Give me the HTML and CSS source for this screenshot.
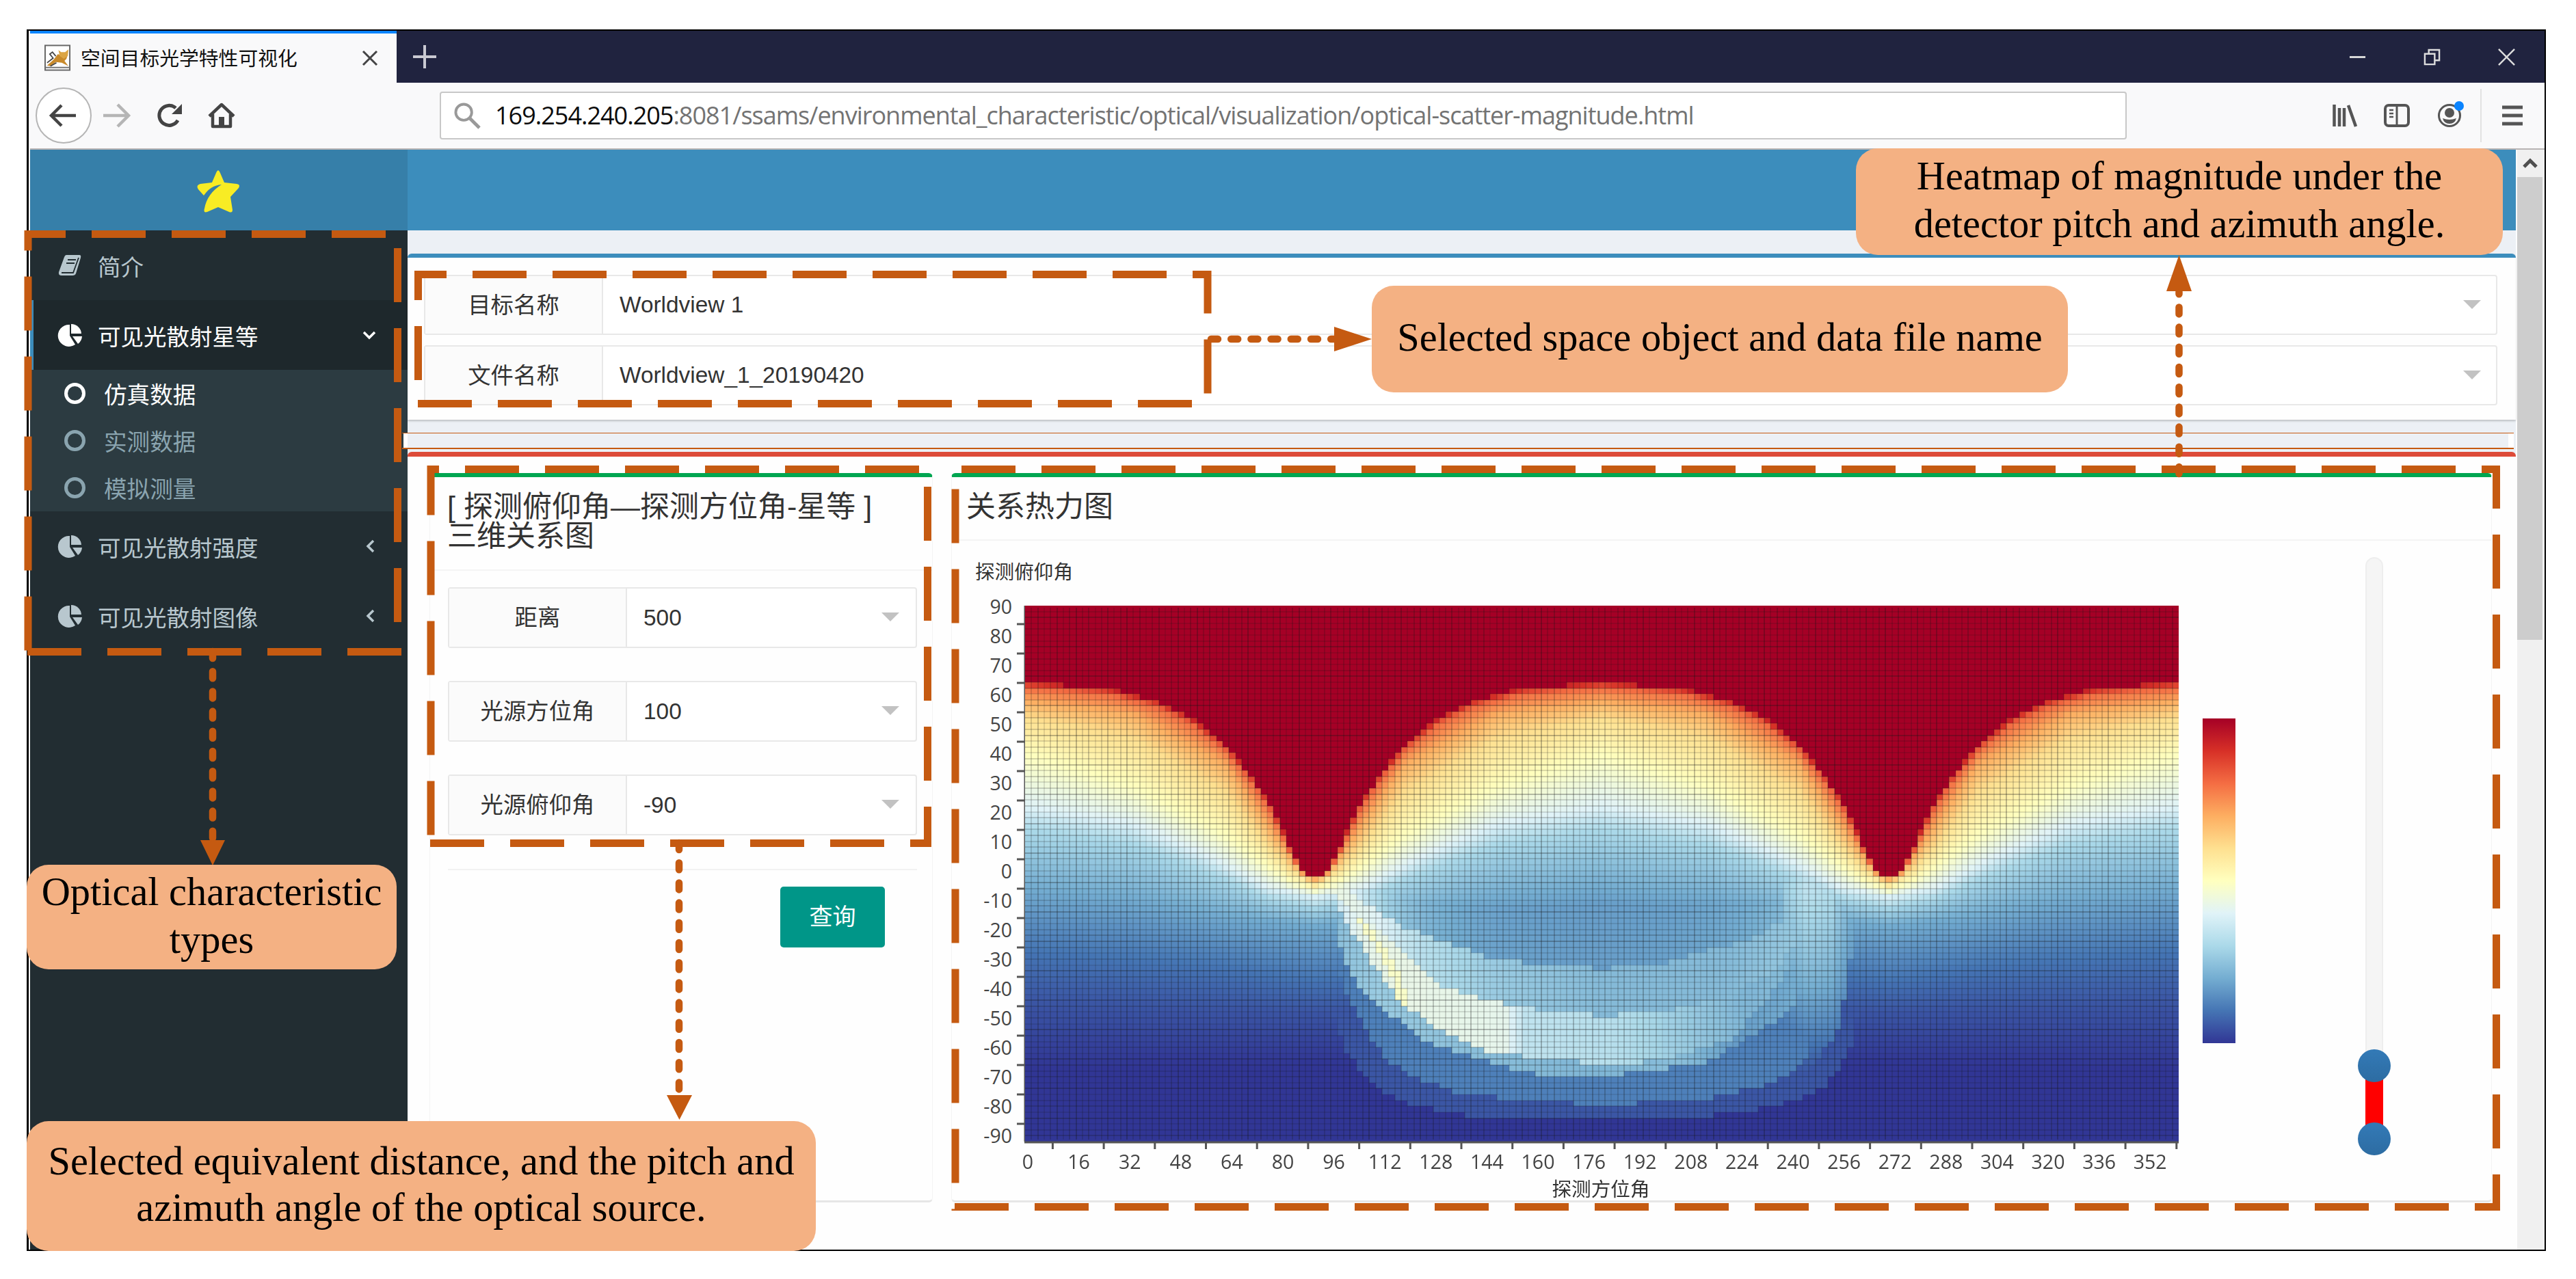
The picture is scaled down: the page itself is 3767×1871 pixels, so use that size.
FILE: index.html
```html
<!DOCTYPE html>
<html lang="zh-CN">
<head>
<meta charset="utf-8">
<title>空间目标光学特性可视化</title>
<link rel="stylesheet" href="styles.css">
</head>
<body>
<div class="window">
  <div class="titlebar">
    <div class="tab">
      <svg class="favicon" viewBox="0 0 40 40"><rect x="1" y="1" width="37" height="37" fill="#fff" stroke="#666" stroke-width="2"/><path d="M2 34h36" stroke="#777" stroke-width="2"/><path d="M4 31 14 22 20 14 24 15 35 14 33 21 30 24 36 32 26 27 17 26 9 32Z" fill="#c98a2b"/><path d="M21 8 25 11 31 11 36 7 35 17 29 21 23 17Z" fill="#dca544"/><path d="M4 27 13 20 8 14 12 11 17 17M18 27 9 32" stroke="#444" stroke-width="1.800" fill="none"/></svg>
      <span class="tab-title">空间目标光学特性可视化</span>
      <svg class="tab-close" viewBox="0 0 24 24"><path d="M2 2 22 22M22 2 2 22" stroke="#444" stroke-width="3"/></svg>
    </div>
    <svg class="tab-new" viewBox="0 0 34 34"><path d="M17 0V34M0 17H34" stroke="#c9c9d2" stroke-width="4"/></svg>
    <div class="window-buttons">
      <svg viewBox="0 0 26 26"><path d="M1 13H25" stroke="#ddd" stroke-width="3"/></svg>
      <svg viewBox="0 0 26 26"><path d="M2 8H17V24H2ZM8 8V2H24V18H17" fill="none" stroke="#ddd" stroke-width="2.5"/></svg>
      <svg viewBox="0 0 26 26"><path d="M1 1 25 25M25 1 1 25" stroke="#ddd" stroke-width="2.5"/></svg>
    </div>
  </div>

  <div class="toolbar">
    <svg class="nav-back" viewBox="0 0 84 84"><circle cx="42" cy="42" r="40" fill="#fff" stroke="#b5b5b5" stroke-width="2"/><path d="M60 42H25M39 27 24 42 39 57" fill="none" stroke="#444" stroke-width="4.5"/></svg>
    <svg class="nav-forward" viewBox="0 0 38 38"><path d="M0 19H36M21 3 37 19 21 35" fill="none" stroke="#b5b5b5" stroke-width="4.5"/></svg>
    <svg class="nav-reload" viewBox="0 0 38 38"><path d="M30 26A14.5 14.5 0 1 1 27 8" fill="none" stroke="#444" stroke-width="5"/><path d="M36 2V17H21Z" fill="#444"/></svg>
    <svg class="nav-home" viewBox="0 0 38 38"><path d="M1 20 19 3 37 20M6 17V35H32V17" fill="none" stroke="#444" stroke-width="4.5" stroke-linejoin="round"/><path d="M15 34V21H23V34" fill="#444"/></svg>
    <div class="urlbar">
      <svg class="search" viewBox="0 0 40 40"><circle cx="14.500" cy="14.500" r="12" fill="none" stroke="#999" stroke-width="4"/><path d="M23 23 38 38" stroke="#999" stroke-width="5"/></svg>
      <span class="url"><b>169.254.240.205</b>:8081/ssams/environmental_characteristic/optical/visualization/optical-scatter-magnitude.html</span>
    </div>
    <div class="tools">
      <svg class="tool-library" viewBox="0 0 36 34"><path d="M2.500 1V33M10 6V33M17 6V33M23 2 34 33" stroke="#555" stroke-width="4.500" fill="none"/></svg>
      <svg class="tool-sidebar" viewBox="0 0 38 34"><rect x="2" y="2" width="34" height="30" rx="5" fill="none" stroke="#555" stroke-width="4"/><path d="M19 3V31" stroke="#555" stroke-width="3"/><path d="M8 9H14M8 14H14M8 19H14" stroke="#555" stroke-width="2.500"/></svg>
      <svg class="tool-account" viewBox="0 0 40 40"><circle cx="18" cy="22" r="15.500" fill="none" stroke="#555" stroke-width="3"/><circle cx="18" cy="18" r="7" fill="#555"/><path d="M8 26Q18 30 28 26 26 34 18 34T8 26Z" fill="#555"/><circle cx="32" cy="8" r="7" fill="#0a84ff"/></svg>
      <span class="tool-divider"></span>
      <svg class="tool-menu" viewBox="0 0 30 30"><path d="M0 3H30M0 15H30M0 27H30" stroke="#555" stroke-width="5"/></svg>
    </div>
  </div>

  <div class="viewport">
    <aside class="sidebar">
      <div class="logo">
        <svg viewBox="0 0 62 62"><path d="M31 0Q33 1 34 4L40 18 58 20Q64 21 61 26L49 39 52 58Q52 63 47 61L31 54 15 61Q9 63 11 56 15 34 36 21 20 22 10 37L2 28Q-2 22 5 20L22 18 28 4Q29 1 31 0Z" fill="#f8ec24"/></svg>
      </div>
      <a class="item">
        <svg class="icon" viewBox="0 0 35 33"><path d="M12 1H31Q34 1 33 5L26 28Q25 31 21 31H5Q0 31 1 26L9 4Q10 1 12 1Z" fill="#b8c7ce"/><path d="M14 8H26M12 13H24M5 27H22L30 5" stroke="#222d32" stroke-width="1.800" fill="none"/></svg>
        <span>简介</span>
      </a>
      <a class="item item-active">
        <svg class="icon" viewBox="0 0 35 33"><path d="M17 1V17L25 30A16 16 0 1 1 17 1Z" fill="#fff"/><path d="M19 0A15 15 0 0 1 34 14H19Z" fill="#fff"/><path d="M21 18H35A15 15 0 0 1 29 29Z" fill="#fff"/></svg>
        <span>可见光散射星等</span>
        <svg class="chev-down" viewBox="0 0 20 12"><path d="M2 2 10 10 18 2" fill="none" stroke="#fff" stroke-width="3.500"/></svg>
      </a>
      <div class="submenu">
        <a class="sub sub-active"><i></i>仿真数据</a>
        <a class="sub"><i></i>实测数据</a>
        <a class="sub"><i></i>模拟测量</a>
      </div>
      <a class="item">
        <svg class="icon" viewBox="0 0 35 33"><path d="M17 1V17L25 30A16 16 0 1 1 17 1Z" fill="#b8c7ce"/><path d="M19 0A15 15 0 0 1 34 14H19Z" fill="#b8c7ce"/><path d="M21 18H35A15 15 0 0 1 29 29Z" fill="#b8c7ce"/></svg>
        <span>可见光散射强度</span>
        <svg class="chev-left" viewBox="0 0 12 20"><path d="M10 2 2 10 10 18" fill="none" stroke="#b8c7ce" stroke-width="3.500"/></svg>
      </a>
      <a class="item">
        <svg class="icon" viewBox="0 0 35 33"><path d="M17 1V17L25 30A16 16 0 1 1 17 1Z" fill="#b8c7ce"/><path d="M19 0A15 15 0 0 1 34 14H19Z" fill="#b8c7ce"/><path d="M21 18H35A15 15 0 0 1 29 29Z" fill="#b8c7ce"/></svg>
        <span>可见光散射图像</span>
        <svg class="chev-left" viewBox="0 0 12 20"><path d="M10 2 2 10 10 18" fill="none" stroke="#b8c7ce" stroke-width="3.500"/></svg>
      </a>
    </aside>

    <main class="main">
      <header class="navbar"></header>
      <section class="box box-select">
        <div class="field"><label>目标名称</label><div class="value">Worldview 1</div></div>
        <div class="field"><label>文件名称</label><div class="value">Worldview_1_20190420</div></div>
      </section>
      <section class="box box-data">
        <div class="panel panel-form">
          <h3>[ 探测俯仰角—探测方位角-星等 ]<br>三维关系图</h3>
          <div class="form">
            <div class="field"><label>距离</label><div class="value">500</div></div>
            <div class="field"><label>光源方位角</label><div class="value">100</div></div>
            <div class="field"><label>光源俯仰角</label><div class="value">-90</div></div>
          </div>
          <div class="actions"><button>查询</button></div>
        </div>
        <div class="panel panel-chart">
          <h3>关系热力图</h3>
          <div class="chart">
            <div class="plot">
              <div class="y-name">探测俯仰角</div>
              <svg class="y-axis" width="108" height="784"></svg>
              <canvas id="heat" width="1687" height="784"></canvas>
              <svg class="x-axis" width="1687" height="88"></svg>
            </div>
            <div class="legend"></div>
            <div class="slider"><span class="range"></span><span class="knob knob-high"></span><span class="knob knob-low"></span></div>
          </div>
        </div>
      </section>
    </main>

    <div class="scrollbar">
      <svg viewBox="0 0 40 40"><path d="M10 25 19 16 28 25" fill="none" stroke="#505050" stroke-width="5"/></svg>
      <div class="thumb"></div>
    </div>
  </div>
</div>

<svg class="annotations" width="3767" height="1871" viewBox="0 0 3767 1871">
  <rect x="590" y="634" width="6" height="21" fill="#fff"/>
  <rect x="3668" y="634" width="8" height="21" fill="#fff"/>
  <path d="M588 633.500H3676" stroke="#c55a11" stroke-width="1"/>
  <path d="M588 656H3676" stroke="#c55a11" stroke-width="2"/>
  <g fill="none" stroke="#c55a11" stroke-width="11" stroke-dasharray="79 38">
    <path d="M40 953.500H581.500V342.500H41V953.500"/>
    <path d="M611 590.500H1766V401.500H611.500V590.500"/>
    <path d="M629 1233.500H1356.500V686.500H630V1233.500"/>
    <path d="M1396 1765.500H3650.500V686.500H1397V1771"/>
  </g>
  <g fill="none" stroke="#c55a11" stroke-width="10.500" stroke-dasharray="10 19.200" stroke-linecap="round">
    <path d="M311 953V1229"/>
    <path d="M993 1233V1600"/>
    <path d="M1771 496H1952"/>
    <path d="M3186.500 693V427"/>
  </g>
  <g fill="#c55a11">
    <path d="M293 1229H329L311 1266Z"/>
    <path d="M975 1602H1012L993.500 1638Z"/>
    <path d="M1951 478V514L2006 496Z"/>
    <path d="M3168 426H3205L3186.500 373Z"/>
  </g>
</svg>
<div class="callout callout-heatmap"><span>Heatmap of magnitude under the</span><span>detector pitch and azimuth angle.</span></div>
<div class="callout callout-object"><span>Selected space object and data file name</span></div>
<div class="callout callout-types"><span>Optical characteristic</span><span>types</span></div>
<div class="callout callout-source"><span>Selected equivalent distance, and the pitch and</span><span>azimuth angle of the optical source.</span></div>
<script src="chart.js"></script>
</body>
</html>
```
FILE: styles.css
```css
* { box-sizing: border-box; }

body {
  margin: 0;
  width: 3767px;
  height: 1871px;
  overflow: hidden;
  position: relative;
  background: #fff;
  font-family: "Liberation Sans", "Noto Sans CJK SC", sans-serif;
  color: #333;
}

svg { display: block; flex: none; overflow: visible; }

.window {
  margin-left: 39px;
  width: 3684px;
  height: 1787px;
  border: 2px solid #000;
  border-left-width: 3px;
  padding-left: 2px;
  position: relative;
  top: 43px;
  overflow: hidden;
}

/* Browser chrome */
.titlebar { display: flex; align-items: center; height: 76px; background: #20233f; }
.tab {
  display: flex;
  align-items: center;
  width: 536px;
  height: 76px;
  padding: 0 27px 0 21px;
  background: #f9f9fa;
  border-top: 4px solid #0a84ff;
}
.favicon { width: 39px; height: 40px; }
.tab-title {
  flex: 1;
  margin-left: 14px;
  padding-bottom: 2px;
  font-size: 28.8px;
  line-height: 40px;
  color: #111;
  font-family: "Noto Sans CJK SC", sans-serif;
}
.tab-close { width: 24px; height: 24px; }
.tab-new { width: 34px; height: 34px; margin-left: 24px; }
.window-buttons { display: flex; gap: 84px; margin-left: auto; margin-right: 43px; }
.window-buttons svg { width: 25px; height: 25px; }

.toolbar {
  display: flex;
  align-items: center;
  height: 98px;
  background: #f9f9fa;
  border-bottom: 2px solid #b8b4b4;
}
.nav-back { width: 84px; height: 84px; margin-left: 7px; }
.nav-forward { width: 38px; height: 38px; margin-left: 16px; }
.nav-reload { width: 38px; height: 38px; margin-left: 41px; }
.nav-home { width: 38px; height: 38px; margin-left: 37px; }
.urlbar {
  display: flex;
  align-items: center;
  width: 2467px;
  height: 70px;
  margin-left: 300px;
  padding-left: 19px;
  background: #fff;
  border: 2px solid #c8c8c8;
  border-radius: 4px;
}
.search { width: 39px; height: 39px; }
.url {
  margin-left: 21px;
  font: 36px/48px "Open Sans", sans-serif;
  letter-spacing: -1px;
  color: #737373;
  white-space: nowrap;
}
.url b { font-weight: 400; color: #0c0c0d; }
.tools { display: flex; align-items: center; margin-left: auto; margin-right: 32px; }
.tool-library { width: 36px; height: 34px; }
.tool-sidebar { width: 38px; height: 34px; margin-left: 39px; }
.tool-account { width: 40px; height: 40px; margin-left: 40px; margin-top: -4px; }
.tool-divider { width: 2px; height: 78px; margin-left: 23px; background: #e2e2e2; }
.tool-menu { width: 30px; height: 30px; margin-left: 30px; }

.viewport { display: flex; height: 1609px; }

/* Sidebar */
.sidebar { width: 552px; background: #222d32; }
.logo { display: flex; align-items: center; justify-content: center; height: 118px; padding: 4px 3px 0 0; background: #367fa9; }
.logo svg { width: 62px; height: 62px; }
.item {
  display: flex;
  align-items: center;
  height: 102px;
  padding: 0 46px 0 41px;
  font-family: "Noto Sans CJK SC", sans-serif;
  font-size: 33.5px;
  color: #b8c7ce;
}
.item span { flex: 1; }
.item-active { padding-left: 36px; background: #1e282c; border-left: 5px solid #3c8dbc; color: #fff; }
.icon { width: 35px; height: 33px; margin-right: 23px; }
.chev-down { width: 20px; height: 12px; margin-right: 0; }
.chev-left { width: 12px; height: 20px; margin-right: 2px; }
.submenu { height: 207px; }
.submenu { background: #2c3b41; }
.sub {
  display: flex;
  align-items: center;
  height: 69px;
  padding-left: 50px;
  font-family: "Noto Sans CJK SC", sans-serif;
  font-size: 33.6px;
  color: #8aa4af;
}
.sub i { width: 31px; height: 31px; margin-right: 27px; border: 5px solid currentColor; border-radius: 50%; }
.sub-active { color: #fff; }

/* Page */
.main { width: 3085px; background: #ecf0f5; border-right: 2px solid #fff; }
.navbar { height: 118px; background: #3c8dbc; }
.box { background: #fefefe; border-top: 6px solid #3c8dbc; border-radius: 6px 6px 0 0; }
.box-select {
  display: flex;
  flex-direction: column;
  gap: 15px;
  height: 243px;
  margin-top: 34px;
  padding: 25px 27px 0 24px;
  box-shadow: 0 2px 3px rgba(0, 0, 0, .2);
}
.field {
  display: flex;
  height: 89px;
  background: #fff;
  border: 2px solid #e8e8e8;
  border-radius: 4px;
  font-size: 33.4px;
}
.box-select .field { height: 88px; }
.field label {
  display: flex;
  align-items: center;
  justify-content: center;
  width: 260px;
  padding-bottom: 6px;
  background: #fbfbfb;
  border-right: 2px solid #e8e8e8;
  font-family: "Noto Sans CJK SC", sans-serif;
}
.value { display: flex; align-items: center; justify-content: space-between; flex: 1; padding: 0 24px 0 24px; }
.box-select .value { padding-right: 22px; }
.value::after {
  content: "";
  border: 13px solid transparent;
  border-top-color: #c2c2c2;
  border-bottom: 0;
  margin-top: -2px;
}

.box-data {
  display: flex;
  gap: 27px;
  height: 1167px;
  margin-top: 47px;
  padding: 24px 35px 0 32px;
  border-top: 7px solid #dd4b39;
}
.panel { height: 1067px; border: 1px solid #f4f4f4; border-top: 6px solid #00a651; border-bottom: 3px solid #e6e6e6; border-radius: 6px; }
.panel-form { width: 736px; }
.panel-chart { flex: 1; }
.panel h3 {
  margin: 0;
  padding: 22px 0 0 25px;
  height: 137px;
  border-bottom: 2px solid #f4f4f4;
  font-size: 43px;
  font-weight: 400;
  line-height: 43px;
  white-space: nowrap;
}
.panel-chart h3 { height: 93px; padding-left: 21px; }
.form { display: flex; flex-direction: column; gap: 48px; margin: 0 22px 0 26px; padding: 24px 0 49px; border-bottom: 2px solid #f2f2f2; }
.actions { display: flex; justify-content: flex-end; padding: 24px 69px 0 0; }
.actions button {
  width: 153px;
  height: 89px;
  padding: 0 0 6px;
  border: 0;
  border-radius: 5px;
  background: #009688;
  color: #fff;
  font: 34px "Noto Sans CJK SC", sans-serif;
}

/* Heatmap */
.chart { display: flex; height: 967px; }
.plot { display: grid; grid-template-columns: 107px 1687px; grid-template-rows: 95px 784px 88px; }
.y-name { grid-column: 1 / 3; padding: 22px 0 0 34px; font: 28.6px/44px "Noto Sans CJK SC", sans-serif; }
.x-axis { grid-column: 2; }
.plot text { font: 28.5px "Open Sans", sans-serif; fill: #444; }
.plot .x-name { font: 28.6px "Noto Sans CJK SC", sans-serif; fill: #333; }
.legend {
  width: 48px;
  height: 475px;
  margin: 260px 0 0 35px;
  background: linear-gradient(#a50026, #d73027, #f46d43, #fdae61, #fee090, #ffffbf, #e0f3f8, #abd9e9, #74add1, #4575b4, #313695);
}
.slider { position: relative; width: 26px; height: 862px; margin: 24px 0 0 190px; border-radius: 13px 13px 0 0; background: #f5f5f5; border: 2px solid #eee; }
.range { position: absolute; left: -2px; top: 742px; width: 26px; height: 110px; background: #f00; }
.knob { position: absolute; left: -13px; width: 48px; height: 48px; border-radius: 50%; background: linear-gradient(#337ab7, #2d6ca2); }
.knob-high { top: 718px; }
.knob-low { top: 825px; }

.scrollbar { width: 40px; background: #f0f0f0; }
.scrollbar svg { width: 40px; height: 40px; }
.thumb { width: 37px; height: 677px; background: #cdcdcd; }

/* Notes over the window */
.annotations { position: absolute; left: 0; top: 0; }
.callout {
  position: absolute;
  display: flex;
  flex-direction: column;
  align-items: center;
  background: #f4b183;
  border-radius: 32px;
  color: #000;
  font: 58.4px/70px "Liberation Serif", serif;
  white-space: nowrap;
}
.callout-heatmap { left: 2714px; top: 217px; width: 946px; height: 156px; padding-top: 6px; }
.callout-object { left: 2006px; top: 418px; width: 1018px; height: 156px; padding-top: 41px; }
.callout-types { left: 39px; top: 1265px; width: 541px; height: 153px; padding-top: 5px; }
.callout-source { left: 39px; top: 1640px; width: 1154px; height: 190px; padding-top: 25px; line-height: 68px; }
```
FILE: chart.js
```js
const COLS = 181, ROWS = 91, W = 1687, H = 784, TOP = 886;
const PALETTE = ['#313695', '#4575b4', '#74add1', '#abd9e9', '#e0f3f8', '#ffffbf', '#fee090', '#fdae61', '#f46d43', '#d73027', '#a50026']
  .map(h => [1, 3, 5].map(i => parseInt(h.substr(i, 2), 16)));

// Piecewise linear interpolation over [x, y] points sorted by x.
function lerp(points, x) {
  if (x <= points[0][0]) return points[0][1];
  for (let i = 1; i < points.length; i++) {
    const [x1, y1] = points[i];
    if (x <= x1) {
      const [x0, y0] = points[i - 1];
      return y0 + (y1 - y0) * (x - x0) / (x1 - x0);
    }
  }
  return points[points.length - 1][1];
}

// Contour height for each level against the angular distance from 90 / 270 degrees.
const EDGE = [[0, 1281], [3, 1281], [4.5, 1265], [8.4, 1233], [14, 1176], [20.2, 1134], [28.3, 1088], [39.2, 1049], [50, 1025], [65, 1007], [90, 998]];
const LEVELS = [
  [0.7, [[0, 1286], [3, 1286], [8, 1252], [15, 1205], [28, 1118], [57, 1044], [90, 1026]]],
  [0.6, [[0, 1292], [8, 1270], [15, 1236], [28, 1160], [57, 1080], [90, 1051]]],
  [0.5, [[0, 1301], [8, 1288], [15, 1266], [28, 1222], [47, 1175], [57, 1150], [90, 1103]]],
  [0.4, [[0, 1311], [15, 1298], [34, 1252], [57, 1205], [90, 1180]]],
  [0.3, [[0, 1328], [15, 1314], [28, 1287], [57, 1235], [90, 1214]]],
  [0.2, [[0, 1354], [28, 1338], [57, 1312], [90, 1298]]],
  [0.1, [[0, 1435], [28, 1415], [90, 1392]]],
  [0.05, [[0, 1480], [90, 1465]]],
  [0, [[0, 1557], [90, 1563]]]
];

function base(d, y) {
  const e = lerp(EDGE, d);
  if (y < e) return 1;
  const pts = [[e, 0.93], [e + (d > 5 ? 9 : 2), 0.8]];
  for (const [v, c] of LEVELS) pts.push([Math.max(lerp(c, d), pts[pts.length - 1][0] + 1), v]);
  return lerp(pts, y);
}

// Lower rims of the nested bowls between 94 and 262 degrees.
const R0 = [[97, 1290], [104, 1316], [116, 1352], [131, 1379], [144, 1399], [160, 1411], [181, 1417], [199, 1409], [213, 1391], [227, 1375], [236, 1348], [246, 1325], [256, 1300]];
const R1 = [[95, 1300], [101, 1328], [112, 1371], [121, 1411], [130, 1443], [143, 1462], [153, 1472], [163, 1480], [181, 1486], [199, 1480], [217, 1462], [227, 1439], [235, 1419], [242, 1370], [256, 1310]];
const R2 = [[93, 1300], [96, 1320], [105, 1387], [112, 1439], [119, 1474], [130, 1510], [144, 1537], [160, 1549], [181, 1557], [196, 1553], [208, 1539], [221, 1518], [231, 1466], [240, 1407], [250, 1340]];
const R3 = [[93, 1310], [96, 1340], [99, 1403], [105, 1450], [114, 1486], [125, 1525], [146, 1555], [159, 1571], [181, 1574], [192, 1569], [213, 1553], [224, 1525], [238, 1482], [247, 1427], [252, 1355], [256, 1320]];
const R4 = [[93, 1320], [97, 1403], [99, 1450], [105, 1498], [112, 1549], [120, 1573], [134, 1597], [149, 1607], [181, 1617], [213, 1607], [233, 1585], [243, 1557], [249, 1533], [254, 1494], [257, 1427], [260, 1320]];
const R5 = [[93, 1330], [96, 1490], [99, 1530], [104, 1569], [111, 1597], [121, 1617], [137, 1632], [181, 1636], [224, 1630], [241, 1609], [250, 1589], [255, 1561], [258, 1530], [260, 1486], [262, 1330]];
const V0 = [[95, 0.44], [110, 0.4], [122, 0.33], [145, 0.27], [180, 0.23], [220, 0.23], [245, 0.27], [262, 0.25]];
const V1 = [[95, 0.36], [104, 0.42], [115, 0.43], [150, 0.42], [156, 0.34], [185, 0.32], [205, 0.27], [225, 0.22], [245, 0.24], [262, 0.2]];
const V2 = [[95, 0.24], [110, 0.27], [140, 0.24], [180, 0.22], [205, 0.24], [222, 0.17], [240, 0.2], [262, 0.12]];
// Soft light along the right-hand rims.
const GLOW = [[1300, 0.34], [1340, 0.3], [1400, 0.25], [1450, 0.2], [1500, 0.14], [1560, 0.06]];

function value(az, y) {
  const d = az <= 180 ? Math.abs(az - 90) : Math.abs(270 - az);
  const b = base(d, y);
  if (az < 94 || az > 263 || y < 1290 && b > 0.35) return b;
  let v = 0;
  if (y < lerp(R0, az)) v = Math.min(0.45, 0.17 + 0.3 * Math.exp(-(az - 98) / 15) + 0.17 * Math.exp(-(256 - az) / 18));
  else if (y < lerp(R1, az)) v = lerp(V0, az);
  else if (y < lerp(R2, az)) {
    v = lerp(V1, az);
    const c = lerp([[1300, 96], [1340, 104], [1371, 108], [1403, 113], [1443, 116.5], [1468, 117]], y);
    if (y < 1468 && Math.abs(az - c) < 1.6) v = 0.48;
  }
  else if (y < lerp(R3, az)) v = lerp(V2, az);
  else if (y < lerp(R4, az)) v = 0.12;
  else if (y < lerp(R5, az)) v = 0.05;
  if (az > 236) {
    const g = lerp(GLOW, y) * lerp([[236, 0.8], [244, 1], [252, 0.95], [258, 0.7], [264, 0.4]], az);
    if (y < lerp(R4, az) + 10) v = az > 244 ? g : Math.max(v, g);
  }
  return Math.max(v, b);
}

function colour(v) {
  const t = Math.min(0.9999, Math.max(0, v)) * 10, i = Math.floor(t), f = t - i;
  return 'rgb(' + PALETTE[i].map((c, k) => Math.round(c + (PALETTE[i + 1][k] - c) * f)).join() + ')';
}

const ctx = document.getElementById('heat').getContext('2d');
const cw = W / COLS, ch = H / ROWS;
for (let c = 0; c < COLS; c++) {
  for (let r = 0; r < ROWS; r++) {
    ctx.fillStyle = colour(value(c * 2, TOP + (r + 0.5) * ch));
    const x = Math.round(c * cw), y = Math.round(r * ch);
    ctx.fillRect(x, y, Math.round((c + 1) * cw) - x, Math.round((r + 1) * ch) - y);
  }
}
for (let c = 1; c < COLS; c++) {
  ctx.fillStyle = 'rgba(20,20,20,' + (0.1 + 0.18 * ((c * 0.37) % 1)) + ')';
  ctx.fillRect(Math.round(c * cw) - 1, 3, 2, H - 6);
}
for (let r = 1; r < ROWS; r++) {
  ctx.fillStyle = 'rgba(20,20,20,' + (r % 5 === 2 ? 0.28 : 0.1 + 0.12 * ((r * 0.41) % 1)) + ')';
  ctx.fillRect(0, Math.round(r * ch) - 1, W, 2);
}

// Axes
const line = (x1, y1, x2, y2) => `<path d="M${x1} ${y1}L${x2} ${y2}" stroke="#555" stroke-width="3"/>`;
const label = (x, y, anchor, t) => `<text x="${x}" y="${y}" text-anchor="${anchor}">${t}</text>`;
let ys = line(107, 0, 107, H), xs = line(-1, 1, W, 1);
for (let i = 0; i <= 18; i++) {
  ys += label(88, 12 + i * 43, 'end', 90 - i * 10);
  if (i < 18) ys += line(95, 27 + i * 43, 107, 27 + i * 43);
}
for (let i = 0; i <= 22; i++) {
  xs += label(4 + i * 74.6, 40, 'middle', i * 16);
  xs += line(40.4 + i * 74.7, 0, 40.4 + i * 74.7, 11);
}
xs += '<text class="x-name" x="842" y="80" text-anchor="middle">探测方位角</text>';
document.querySelector('.y-axis').innerHTML = ys;
document.querySelector('.x-axis').innerHTML = xs;
```
